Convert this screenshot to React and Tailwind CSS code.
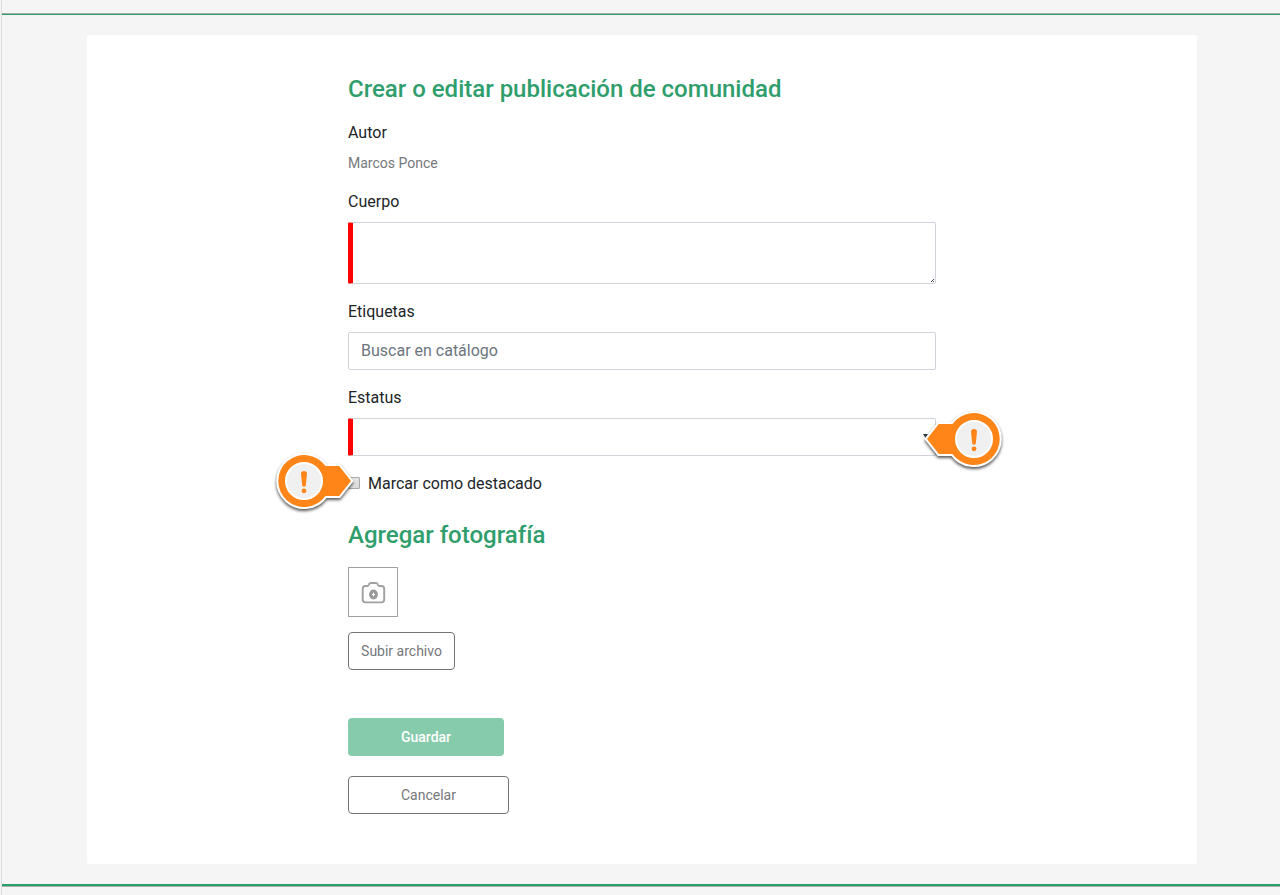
function Callout({ flip, className }) {
  return (
    <svg
      className={`absolute pointer-events-none overflow-visible drop-shadow-[0_2px_1.5px_rgba(0,0,0,0.65)] ${className}`}
      width="80"
      height="56"
      viewBox="0 0 80 56"
      aria-hidden="true"
    >
      <g transform={flip ? 'translate(80 0) scale(-1 1)' : undefined}>
        <path
          d="M49.5 13H63.2L75 28L63.2 43H49.5A26 26 0 1 1 49.5 13Z"
          fill="#ff8519"
          stroke="#fff"
          strokeWidth="4"
          paintOrder="stroke"
        />
        <circle cx="28" cy="28" r="18" fill="#f0f0f0" stroke="#fff" strokeWidth="2" />
        <path d="M25 20.5a3 2.6 0 0 1 6 0L29.9 31.8a1.9 1.9 0 0 1-3.8 0Z" fill="#ff8519" />
        <circle cx="28" cy="37.8" r="2.4" fill="#ff8519" />
      </g>
    </svg>
  );
}

function CameraIcon() {
  return (
    <svg width="26" height="24" viewBox="0 0 26 24" fill="none" stroke="#a0a0a0" strokeWidth="1.9" strokeLinejoin="round">
      <path d="M5.4 5h1.9c.8 0 1.2-.4 1.4-1.1C9 2.6 9.6 2 10.8 2h5.1c1.2 0 1.8.6 2.1 1.9.2.7.6 1.1 1.4 1.1h1.9c1.8 0 2.9 1.1 2.9 2.9v10.7c0 1.8-1.1 2.8-2.9 2.8H5.6c-1.8 0-2.9-1-2.9-2.8V7.9C2.7 6.1 3.8 5 5.4 5Z" />
      <ellipse cx="13.5" cy="13.5" rx="4.4" ry="4.9" fill="#999" stroke="none" />
      <path d="M13.5 11.6v3.8M12 13.5h3" stroke="#fff" strokeWidth="1" />
    </svg>
  );
}

export default function App() {
  return (
    <div className="relative flex h-[895px] w-[1280px] overflow-hidden bg-[#f5f5f5] font-[Roboto,sans-serif] text-base leading-6 text-[#212529]">
      <div className="w-0.5 shrink-0 border-r border-[#dedede]" />
      <div className="flex flex-1 flex-col">
        <div className="mt-[13px] h-0.5 shrink-0 border-t border-[#a9aea7] bg-[#2ba06c]" />
        <main className="mt-5 ml-[85px] h-[829px] w-[1110px] shrink-0 rounded-[2px] bg-white pt-[40px] pl-[261px]">
          <form className="flex w-[588px] flex-col items-start">
            <h2 className="text-2xl leading-[29px] font-medium text-[#2f9e6c]">Crear o editar publicación de comunidad</h2>
            <div className="mt-[17px]">Autor</div>
            <div className="mt-2 h-[21px] text-sm leading-[21px] text-[#75787b]">Marcos Ponce</div>

            <label className="mt-4" htmlFor="body">Cuerpo</label>
            <div className="relative mt-2 flex h-[62px] w-full">
              <textarea
                id="body"
                className="h-full w-full resize-none rounded-[2px] border border-l-[5px] border-[#ced4da] border-l-[#f00] outline-none"
              />
              <svg className="absolute right-[2px] bottom-[2px]" width="3" height="3" viewBox="0 0 3 3" fill="#444">
                <path d="M2 0h1v1H2zM1 1h1v1H1zM0 2h1v1H0zM2 2h1v1H2z" />
              </svg>
            </div>

            <label className="mt-4" htmlFor="tags">Etiquetas</label>
            <input
              id="tags"
              className="mt-2 h-[38px] w-full rounded-[2px] border border-[#ced4da] px-3 pb-0.5 outline-none placeholder:text-[#6c757d]"
              placeholder="Buscar en catálogo"
            />

            <div className="mt-4">Estatus</div>
            <div className="mt-2 flex h-[38px] w-full items-center justify-end rounded-[2px] border border-l-[5px] border-[#ced4da] border-l-[#f00] pr-[7px]">
              <svg className="mb-0.5" width="5" height="4" viewBox="0 0 5 4" fill="#343a40">
                <path d="M0 0h5L2.5 4Z" />
              </svg>
            </div>

            <div className="mt-4 flex h-6 items-center">
              <div className="mr-2 mb-0.5 size-3 rounded-[1px] border border-[#aaa] bg-linear-to-br from-[#eee] to-[#d8d8d8]" />
              <span>Marcar como destacado</span>
            </div>

            <h2 className="mt-[25px] text-2xl leading-[29px] font-medium text-[#2f9e6c]">Agregar fotografía</h2>
            <div className="mt-[17px] flex size-[50px] items-center justify-center border border-[#a0a0a0] pt-0.5">
              <CameraIcon />
            </div>
            <button type="button" className="mt-[15px] h-[38px] w-[107px] rounded-[4px] border border-[#757575] text-sm text-[#75787b]">
              Subir archivo
            </button>
            <button type="button" className="mt-12 h-[38px] w-[156px] rounded-[4px] bg-[#86ccac] text-sm font-medium text-white">
              Guardar
            </button>
            <button type="button" className="mt-5 h-[38px] w-[161px] rounded-[4px] border border-[#757575] text-sm text-[#75787b]">
              Cancelar
            </button>
          </form>
        </main>
        <div className="mt-5 h-[3px] shrink-0 border-b border-[#a9aea7] bg-[#2ba06c]" />
      </div>
      <Callout className="top-[453px] left-[276px]" />
      <Callout flip className="top-[411px] left-[922px]" />
    </div>
  );
}
